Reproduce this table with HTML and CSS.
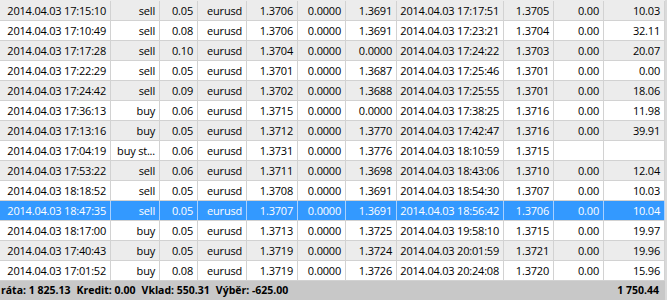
FILE: index.html
```html
<!DOCTYPE html>
<html>
<head>
<meta charset="utf-8">
<link rel="stylesheet" href="styles.css">
</head>
<body>
<div class="frame">
  <div class="grid">
    <div class="row alt"><span>2014.04.03 17:15:10</span><span>sell</span><span>0.05</span><span>eurusd</span><span>1.3706</span><span>0.0000</span><span>1.3691</span><span>2014.04.03 17:17:51</span><span>1.3705</span><span>0.00</span><span>10.03</span></div>
    <div class="row"><span>2014.04.03 17:10:49</span><span>sell</span><span>0.08</span><span>eurusd</span><span>1.3706</span><span>0.0000</span><span>1.3691</span><span>2014.04.03 17:23:21</span><span>1.3704</span><span>0.00</span><span>32.11</span></div>
    <div class="row alt"><span>2014.04.03 17:17:28</span><span>sell</span><span>0.10</span><span>eurusd</span><span>1.3704</span><span>0.0000</span><span>0.0000</span><span>2014.04.03 17:24:22</span><span>1.3703</span><span>0.00</span><span>20.07</span></div>
    <div class="row"><span>2014.04.03 17:22:29</span><span>sell</span><span>0.05</span><span>eurusd</span><span>1.3701</span><span>0.0000</span><span>1.3687</span><span>2014.04.03 17:25:46</span><span>1.3701</span><span>0.00</span><span>0.00</span></div>
    <div class="row alt"><span>2014.04.03 17:24:42</span><span>sell</span><span>0.09</span><span>eurusd</span><span>1.3702</span><span>0.0000</span><span>1.3688</span><span>2014.04.03 17:25:55</span><span>1.3701</span><span>0.00</span><span>18.06</span></div>
    <div class="row"><span>2014.04.03 17:36:13</span><span>buy</span><span>0.06</span><span>eurusd</span><span>1.3715</span><span>0.0000</span><span>0.0000</span><span>2014.04.03 17:38:25</span><span>1.3716</span><span>0.00</span><span>11.98</span></div>
    <div class="row alt"><span>2014.04.03 17:13:16</span><span>buy</span><span>0.05</span><span>eurusd</span><span>1.3712</span><span>0.0000</span><span>1.3770</span><span>2014.04.03 17:42:47</span><span>1.3716</span><span>0.00</span><span>39.91</span></div>
    <div class="row"><span>2014.04.03 17:04:19</span><span>buy st...</span><span>0.06</span><span>eurusd</span><span>1.3731</span><span>0.0000</span><span>1.3776</span><span>2014.04.03 18:10:59</span><span>1.3715</span><span></span><span></span></div>
    <div class="row alt"><span>2014.04.03 17:53:22</span><span>sell</span><span>0.06</span><span>eurusd</span><span>1.3711</span><span>0.0000</span><span>1.3698</span><span>2014.04.03 18:43:06</span><span>1.3710</span><span>0.00</span><span>12.04</span></div>
    <div class="row"><span>2014.04.03 18:18:52</span><span>sell</span><span>0.05</span><span>eurusd</span><span>1.3708</span><span>0.0000</span><span>1.3691</span><span>2014.04.03 18:54:30</span><span>1.3707</span><span>0.00</span><span>10.03</span></div>
    <div class="row selected"><span>2014.04.03 18:47:35</span><span>sell</span><span>0.05</span><span>eurusd</span><span>1.3707</span><span>0.0000</span><span>1.3691</span><span>2014.04.03 18:56:42</span><span>1.3706</span><span>0.00</span><span>10.04</span></div>
    <div class="row"><span>2014.04.03 18:17:00</span><span>buy</span><span>0.05</span><span>eurusd</span><span>1.3713</span><span>0.0000</span><span>1.3725</span><span>2014.04.03 19:58:10</span><span>1.3715</span><span>0.00</span><span>19.97</span></div>
    <div class="row alt"><span>2014.04.03 17:40:43</span><span>buy</span><span>0.05</span><span>eurusd</span><span>1.3719</span><span>0.0000</span><span>1.3724</span><span>2014.04.03 20:01:59</span><span>1.3721</span><span>0.00</span><span>19.96</span></div>
    <div class="row"><span>2014.04.03 17:01:52</span><span>buy</span><span>0.08</span><span>eurusd</span><span>1.3719</span><span>0.0000</span><span>1.3726</span><span>2014.04.03 20:24:08</span><span>1.3720</span><span>0.00</span><span>15.96</span></div>
  </div>
  <div class="footer">
    <div class="summary">
      <span>ráta: 1 825.13</span>
      <span>Kredit: 0.00</span>
      <span>Vklad: 550.31</span>
      <span>Výběr: -625.00</span>
    </div>
    <span class="total">1 750.44</span>
  </div>
</div>
</body>
</html>
```

FILE: styles.css
```css
html, body {
  margin: 0;
  padding: 0;
  background: #ffffff;
  overflow: hidden;
}

body {
  font-family: "Open Sans", "Noto Sans", sans-serif;
  font-size: 11px;
  color: #000000;
}

.frame {
  width: 665px;
  border-right: 2px solid #dadada;
  padding-top: 1px;
  background: #ececec;
}

.grid {
  background: #ffffff;
}

.row {
  display: grid;
  grid-template-columns: 111px 49px 38px 49px 51px 48px 51px 107px 50px 50px 61px;
  height: 20px;
  box-sizing: border-box;
  border-bottom: 1px solid #d2d2d2;
  background: #ffffff;
}

.row.alt {
  background: #ececec;
}

.row span {
  box-sizing: border-box;
  border-right: 1px solid #d2d2d2;
  padding: 0 4px 0 0;
  text-align: right;
  line-height: 20px;
  letter-spacing: -0.2px;
  white-space: nowrap;
  overflow: hidden;
}

.row.selected {
  background: #3399ff;
  color: #ffffff;
}

.row.selected span {
  border-right-color: #a9d1ff;
}

.footer {
  display: flex;
  justify-content: space-between;
  height: 19px;
  line-height: 19px;
  background: #c8c8c8;
  font-size: 10.5px;
  font-weight: bold;
  white-space: nowrap;
}

.summary {
  display: flex;
  gap: 6px;
  padding-left: 1px;
}

.total {
  padding-right: 6px;
}
```
